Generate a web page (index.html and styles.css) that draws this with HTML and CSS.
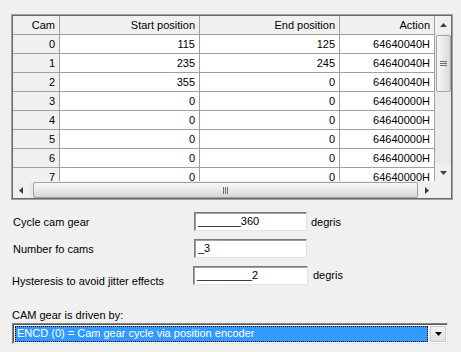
FILE: index.html
```html
<!DOCTYPE html>
<html>
<head>
<meta charset="utf-8">
<link rel="stylesheet" href="styles.css">
</head>
<body>
<div class="page">
  <div class="grid-frame">
    <div class="grid-inner">
      <div class="viewport">
        <div class="table">
          <div class="cell head fixed">Cam</div><div class="cell head">Start position</div><div class="cell head">End position</div><div class="cell head">Action</div>
          <div class="cell fixed">0</div><div class="cell">115</div><div class="cell">125</div><div class="cell">64640040H</div>
          <div class="cell fixed">1</div><div class="cell">235</div><div class="cell">245</div><div class="cell">64640040H</div>
          <div class="cell fixed">2</div><div class="cell">355</div><div class="cell">0</div><div class="cell">64640040H</div>
          <div class="cell fixed">3</div><div class="cell">0</div><div class="cell">0</div><div class="cell">64640000H</div>
          <div class="cell fixed">4</div><div class="cell">0</div><div class="cell">0</div><div class="cell">64640000H</div>
          <div class="cell fixed">5</div><div class="cell">0</div><div class="cell">0</div><div class="cell">64640000H</div>
          <div class="cell fixed">6</div><div class="cell">0</div><div class="cell">0</div><div class="cell">64640000H</div>
          <div class="cell fixed">7</div><div class="cell">0</div><div class="cell">0</div><div class="cell">64640000H</div>
        </div>
      </div>
      <div class="vscroll">
        <div class="sb-btn v-btn"><svg width="7" height="4" viewBox="0 0 7 4"><path d="M0 4 L3.5 0 L7 4 Z" fill="#404040"/></svg></div>
        <div class="vtrack">
          <div class="vthumb"><span class="vgrip"></span></div>
        </div>
        <div class="sb-btn v-btn"><svg width="7" height="4" viewBox="0 0 7 4"><path d="M0 0 L3.5 4 L7 0 Z" fill="#404040"/></svg></div>
      </div>
      <div class="hscroll">
        <div class="sb-btn h-btn"><svg width="4" height="7" viewBox="0 0 4 7"><path d="M4 0 L0 3.5 L4 7 Z" fill="#404040"/></svg></div>
        <div class="htrack">
          <div class="hthumb"><span class="hgrip"></span></div>
        </div>
        <div class="sb-btn h-btn"><svg width="4" height="7" viewBox="0 0 4 7"><path d="M0 0 L4 3.5 L0 7 Z" fill="#404040"/></svg></div>
      </div>
      <div class="corner"></div>
    </div>
  </div>

  <div class="form">
    <div class="row">
      <div class="label">Cycle cam gear</div>
      <div class="field">_______360</div>
      <div class="unit">degris</div>
    </div>
    <div class="row">
      <div class="label">Number fo cams</div>
      <div class="field">_3</div>
    </div>
    <div class="row row-hyst">
      <div class="label">Hysteresis to avoid jitter effects</div>
      <div class="field">_________2</div>
      <div class="unit">degris</div>
    </div>
  </div>

  <div class="combo-label">CAM gear is driven by:</div>
  <div class="combo">
    <div class="combo-sel">ENCD (0) = Cam gear cycle via position encoder</div>
    <div class="combo-btn"><svg width="7" height="4" viewBox="0 0 7 4"><path d="M0 0 L3.5 4 L7 0 Z" fill="#000"/></svg></div>
  </div>
</div>
</body>
</html>
```
FILE: styles.css
```css
html, body {
  margin: 0;
  padding: 0;
  background: #f0f0f0;
}
body {
  font-family: "Liberation Sans", Arial, sans-serif;
  font-size: 11px;
  color: #000;
}
.page {
  padding: 14px 0 0 11px;
}

/* grid control */
.grid-frame {
  width: 442px;
  box-sizing: border-box;
  border: 1px solid #a0a0a0;
}
.grid-inner {
  border: 1px solid #696969;
  display: grid;
  grid-template-columns: 422px 16px;
  grid-template-rows: 165px 17px;
  background: #f0f0f0;
}
.viewport {
  overflow: hidden;
  background: #fff;
}
.table {
  display: grid;
  grid-template-columns: 47px 140px 140px 95px;
  grid-auto-rows: 19px;
}
.cell {
  box-sizing: border-box;
  border-right: 1px solid #a0a0a0;
  border-bottom: 1px solid #a0a0a0;
  text-align: right;
  padding-right: 4px;
  line-height: 18px;
  background: #fff;
  white-space: nowrap;
  overflow: hidden;
}
.cell.fixed, .cell.head {
  background: #f0f0f0;
}

/* scrollbars */
.vscroll {
  display: flex;
  flex-direction: column;
  background: #eaeaea;
}
.sb-btn {
  display: flex;
  align-items: center;
  justify-content: center;
  background: #f0f0f0;
}
.v-btn {
  height: 17px;
}
.vtrack {
  flex: 1;
  padding: 2px 0 0 1px;
}
.vthumb {
  width: 15px;
  height: 57px;
  box-sizing: border-box;
  border: 1px solid #a3a3a3;
  border-radius: 2px;
  background: linear-gradient(to right, #f7f7f7, #e6e6e6 60%, #d6d6d6);
  display: flex;
  align-items: center;
  justify-content: center;
}
.vgrip {
  width: 7px;
  height: 5px;
  background: repeating-linear-gradient(to bottom, #6d6d6d 0 1px, transparent 1px 2px);
}
.hscroll {
  display: flex;
  background: #eaeaea;
  border-top: 1px solid #f0f0f0;
}
.h-btn {
  width: 16px;
}
.htrack {
  flex: 1;
  padding: 0 1px 0 4px;
}
.hthumb {
  height: 16px;
  box-sizing: border-box;
  border: 1px solid #a3a3a3;
  border-radius: 2px;
  background: linear-gradient(to bottom, #f7f7f7, #e6e6e6 60%, #d6d6d6);
  display: flex;
  align-items: center;
  justify-content: center;
}
.hgrip {
  width: 5px;
  height: 7px;
  background: repeating-linear-gradient(to right, #6d6d6d 0 1px, transparent 1px 2px);
}
.corner {
  background: #f0f0f0;
}

/* form */
.form {
  margin-top: 12px;
  display: flex;
  flex-direction: column;
  gap: 8px;
}
.row {
  display: flex;
  align-items: center;
  height: 19px;
}
.label {
  width: 183px;
  padding-left: 2px;
  box-sizing: border-box;
  white-space: nowrap;
}
.field {
  width: 113px;
  height: 19px;
  box-sizing: border-box;
  border: 1px solid;
  border-color: #7a7a7a #e3e3e3 #e3e3e3 #7a7a7a;
  box-shadow: inset 1px 1px 0 #a0a0a0;
  background: #fff;
  padding: 0 0 0 3px;
  line-height: 17px;
  white-space: nowrap;
  overflow: hidden;
}
.unit {
  margin-left: 4px;
}
.row-hyst {
  align-items: flex-start;
}
.row-hyst .label {
  padding-left: 1px;
  padding-top: 9px;
  width: 182px;
}
.row-hyst .field {
  width: 115px;
}
.row-hyst .unit {
  margin-left: 5px;
  padding-top: 3px;
}

.combo-label {
  margin-top: 24px;
  padding-left: 1px;
}
.combo {
  margin-top: 2px;
  margin-left: 1px;
  width: 436px;
  height: 21px;
  box-sizing: border-box;
  border: 1px solid;
  border-color: #828282 #e6e6e6 #e6e6e6 #828282;
  box-shadow: inset 1px 1px 0 #5a5a5a;
  background: #fff;
  padding: 2px 1px 1px 2px;
  display: flex;
  gap: 2px;
}
.combo-sel {
  flex: 1;
  background: #3399ff;
  color: #fff;
  outline: 1px dotted #000;
  outline-offset: -1px;
  padding-left: 2px;
  line-height: 15px;
  white-space: nowrap;
}
.combo-btn {
  width: 16px;
  box-sizing: border-box;
  border: 1px solid #c8c8c8;
  background: linear-gradient(#f4f4f4, #e2e2e2);
  display: flex;
  align-items: center;
  justify-content: center;
}
```
